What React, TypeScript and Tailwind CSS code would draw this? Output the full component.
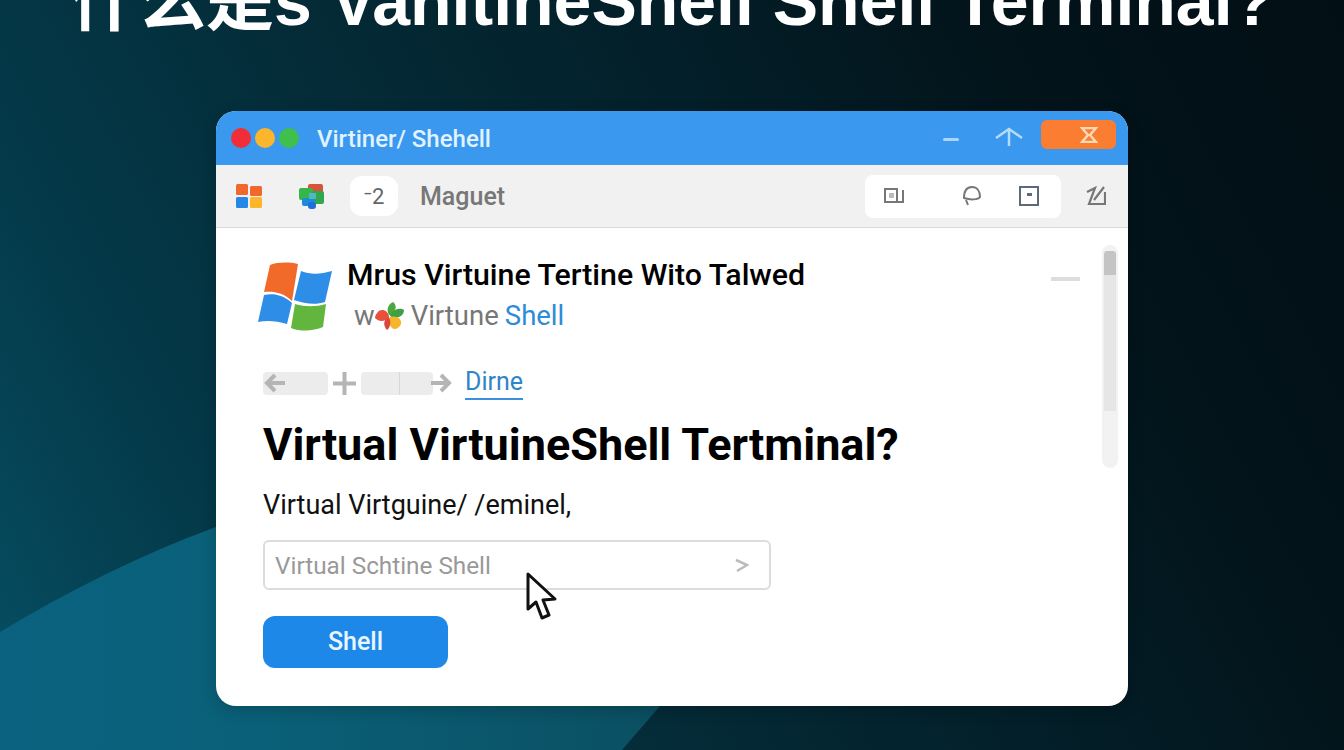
import React from 'react';

const WinLogo = () => (
  <svg width="74" height="70" viewBox="0 0 74 70">
    <path d="M6 30L12 3C20 0 31 0 40 2L34 39C26 31 16 29 6 30Z" fill="#f26a2a" />
    <path d="M43 9C53 13 63 12 74 9L67 40C58 43 47 42 36 38Z" fill="#2e8de6" />
    <path d="M6 33C16 31 25 33 34 41L29 62C19 59 9 58 0 60Z" fill="#2e8de6" />
    <path d="M37 42C47 45 58 45 68 42L65 65C56 69 43 70 33 66Z" fill="#62b53d" />
  </svg>
);

const SmallWin = () => (
  <svg width="26" height="25" viewBox="0 0 26 25">
    <rect x="0" y="0" width="12" height="11" rx="1.5" fill="#f0682c" />
    <rect x="14" y="2" width="12" height="10" rx="1.5" fill="#f0682c" />
    <rect x="0" y="13" width="12" height="11" rx="1.5" fill="#2488e4" />
    <rect x="14" y="13" width="12" height="11" rx="1.5" fill="#fbb62c" />
  </svg>
);

const CubeCluster = () => (
  <svg width="26" height="25" viewBox="0 0 26 25">
    <rect x="9" y="0" width="15" height="12" rx="2" fill="#d8533a" />
    <rect x="0" y="4" width="14" height="12" rx="2" fill="#35b54a" />
    <rect x="13" y="7" width="12" height="13" rx="2" fill="#2ea84a" />
    <rect x="3" y="14" width="13" height="8" rx="2" fill="#1f8ad8" />
    <rect x="9" y="18" width="8" height="7" rx="3" fill="#1f6fd8" />
    <rect x="10" y="9" width="7" height="6" rx="1" fill="#52b8c0" />
  </svg>
);

const Clover = () => (
  <svg width="29" height="28" viewBox="0 0 29 28">
    <path d="M14 14C12 7 5 7 3 10C1 12 0 14 0 16C4 20 10 20 14 15Z" fill="#e8503a" />
    <path d="M14 13C11 8 13 2 18 0C22 3 22 9 15 13Z" fill="#4aa83e" />
    <path d="M15 13C20 6 26 6 29 8C29 14 22 18 15 14Z" fill="#3f9f45" />
    <path d="M15 15C22 13 27 17 26 22C24 27 19 28 17 26C14 23 14 19 15 15Z" fill="#f7b52c" />
    <path d="M14 15C8 17 8 24 12 28C16 25 16 19 14 15Z" fill="#d8483a" />
  </svg>
);

const Cursor = () => (
  <svg width="32" height="48" viewBox="0 0 32 48">
    <path d="M2 2L2 37L10 30L16 46L23 43L17 28L29 27Z" fill="#fff" stroke="#111" strokeWidth="3" strokeLinejoin="round" />
  </svg>
);

export default function App() {
  return (
    <div className="relative h-[750px] w-[1344px] overflow-hidden bg-[linear-gradient(62deg,#065064_0%,#043a4a_18%,#042c38_38%,#03202a_58%,#03141b_78%,#020f15_100%)] [font-family:Roboto,'Noto_Sans_CJK_SC',sans-serif]">
      {/* background swoosh */}
      <svg className="absolute inset-0" width="1344" height="750" viewBox="0 0 1344 750">
        <defs>
          <linearGradient id="swoosh" x1="0" y1="0" x2="1" y2="0">
            <stop offset="0" stopColor="#0a6280" />
            <stop offset="0.4" stopColor="#0a6078" />
            <stop offset="1" stopColor="#0b4f62" />
          </linearGradient>
        </defs>
        <path d="M0 632C70 590 140 555 216 527L660 527L660 706L622 750L0 750Z" fill="url(#swoosh)" />
      </svg>

      <div className="relative flex flex-col items-center">
        <h1 className="mt-[-31px] h-[142px] text-center text-[68px] font-bold leading-[64px] whitespace-nowrap text-white [font-family:'Liberation_Sans','Noto_Sans_CJK_SC',sans-serif]">
          什么是s VanitineShell Shell Terminal?
        </h1>

        <div className="flex h-[595px] w-[912px] flex-col overflow-hidden rounded-[20px] bg-white shadow-[0_4px_16px_rgba(0,0,0,0.2)]">
          {/* title bar */}
          <div className="flex h-[54px] shrink-0 items-center bg-[#3a98ee] pl-[15px] pr-[12px]">
            <div className="flex items-center gap-[4px]">
              <span className="h-5 w-5 rounded-full bg-[#f12e37]" />
              <span className="h-5 w-5 rounded-full bg-[#fbb62c]" />
              <span className="h-5 w-5 rounded-full bg-[#3fbf4b]" />
            </div>
            <span className="ml-[18px] mt-[2px] text-[24px] font-medium text-[#e0f3ff]">Virtiner/ Shehell</span>
            <span className="ml-auto mt-[3px] h-[3px] w-4 rounded bg-[#a9d6f7]" />
            <svg className="ml-[35px] mb-[3px]" width="30" height="20" viewBox="0 0 30 20" fill="none" stroke="#b4dcf8" strokeWidth="2.5">
              <path d="M2 11L15 2L28 11M15 2V19" />
            </svg>
            <div className="ml-[17px] mb-[7px] flex h-[29px] w-[75px] items-center justify-end rounded-md bg-[#fa7d32] pr-[18px]">
              <svg width="18" height="16" viewBox="0 0 18 16" fill="none" stroke="#fcd9b8" strokeWidth="2.5">
                <path d="M2 1H16L10 8L16 15H2L8 8Z" />
              </svg>
            </div>
          </div>

          {/* toolbar */}
          <div className="flex h-[63px] shrink-0 items-center border-b border-[#dcdcdc] bg-[#f1f1f1] pl-[20px] pr-[22px]">
            <SmallWin />
            <span className="ml-[37px]"><CubeCluster /></span>
            <div className="ml-[25px] flex h-10 w-12 items-center justify-center rounded-xl bg-white text-[22px] text-[#666]">⁻2</div>
            <span className="ml-[22px] mt-[1px] text-[25px] font-medium text-[#777]">Maguet</span>
            <div className="ml-auto flex h-[43px] w-[196px] items-center rounded-lg bg-white pl-[19px]">
              <svg width="20" height="16" viewBox="0 0 20 16" fill="none" stroke="#777" strokeWidth="2">
                <path d="M1 1H13V14H1ZM1 14H19V2" />
                <rect x="5" y="5" width="5" height="5" fill="#bbb" stroke="none" />
              </svg>
              <svg className="ml-[58px]" width="20" height="22" viewBox="0 0 20 22" fill="none" stroke="#777" strokeWidth="2">
                <path d="M2 13C2 6 5 2 10 2C15 2 18 6 18 12C16 15 8 15 2 13ZM4 15L6 20" />
              </svg>
              <svg className="ml-[37px]" width="20" height="20" viewBox="0 0 20 20" fill="none" stroke="#5d6b78" strokeWidth="2">
                <rect x="1" y="1" width="18" height="18" />
                <rect x="8" y="7" width="5" height="3" fill="#5d6b78" stroke="none" />
              </svg>
            </div>
            <svg className="ml-[25px]" width="20" height="20" viewBox="0 0 20 20" fill="none" stroke="#777" strokeWidth="2.2">
              <path d="M1 6L9 2L3 18H19V6M18 1L8 14" />
            </svg>
          </div>

          {/* body */}
          <div className="relative flex flex-1 flex-col pl-[47px]">
            <div className="mt-[31px] flex items-start">
              <span className="ml-[-5px] mt-[3px]"><WinLogo /></span>
              <div className="ml-[15px] flex flex-col">
                <span className="text-[30.3px] font-medium leading-[32px] text-black">Mrus Virtuine Tertine Wito Talwed</span>
                <div className="ml-[7px] mt-[8px] flex items-center text-[27.5px] leading-[34px] text-[#777]">
                  <span>w</span>
                  <Clover />
                  <span className="ml-[7px]">Virtune</span>
                  <span className="ml-[6px] text-[#2e8bd8]">Shell</span>
                </div>
              </div>
            </div>

            <div className="mt-[33px] flex items-center">
              <div className="flex h-[23px] w-[65px] items-center rounded-sm bg-[#ececec]">
                <svg width="24" height="22" viewBox="0 0 24 22" fill="none" stroke="#b5b5b5" strokeWidth="4"><path d="M22 11H4M12 3L4 11L12 19" /></svg>
              </div>
              <svg className="ml-[5px]" width="23" height="23" viewBox="0 0 23 23" fill="none" stroke="#b5b5b5" strokeWidth="4"><path d="M0 11.5H23M11.5 0V23" /></svg>
              <div className="ml-[5px] flex h-[23px] w-[72px] rounded-sm bg-[#ececec]">
                <div className="ml-[38px] h-full w-px bg-[#d8d8d8]" />
              </div>
              <svg className="ml-[-2px]" width="22" height="22" viewBox="0 0 22 22" fill="none" stroke="#b5b5b5" strokeWidth="4"><path d="M0 11H18M10 3L18 11L10 19" /></svg>
              <span className="ml-[12px] border-b-2 border-[#3a90dc] text-[25px] leading-[32px] text-[#2e85c8]">Dirne</span>
            </div>

            <h2 className="mt-[19px] text-[45px] font-bold leading-[52px] text-black">Virtual VirtuineShell Tertminal?</h2>

            <p className="mt-[17px] text-[27px] leading-[34px] text-[#111]">Virtual Virtguine/ /eminel,</p>

            <div className="relative mt-[18px] flex h-[50px] w-[508px] items-center justify-between rounded-md border-2 border-[#dcdcdc] pl-[10px] pr-[20px]">
              <span className="mt-[2px] text-[24.3px] text-[#999]">Virtual Schtine Shell</span>
              <svg width="14" height="16" viewBox="0 0 14 16" fill="none" stroke="#bbb" strokeWidth="2.5"><path d="M1 3L12 8L2 14" /></svg>
              <span className="absolute left-[261px] top-[30px]"><Cursor /></span>
            </div>

            <button className="mt-[26px] flex h-[52px] w-[185px] items-center justify-center rounded-xl bg-[#1e88e8] text-[25px] font-medium text-[#eaf6ff]">Shell</button>

            {/* dash and scrollbar sit over the content */}
            <span className="absolute right-[48px] top-[49px] h-1 w-[29px] bg-[#ddd]" />
            <div className="absolute right-[10px] top-[17px] h-[223px] w-[16px] rounded-full bg-[#f2f2f2] p-[2px] pt-[6px]">
              <div className="h-[160px] w-full bg-[#e6e6e6]">
                <div className="h-[24px] w-full rounded-t-sm bg-[#c4c4c4]" />
              </div>
            </div>
          </div>
        </div>
      </div>
    </div>
  );
}
